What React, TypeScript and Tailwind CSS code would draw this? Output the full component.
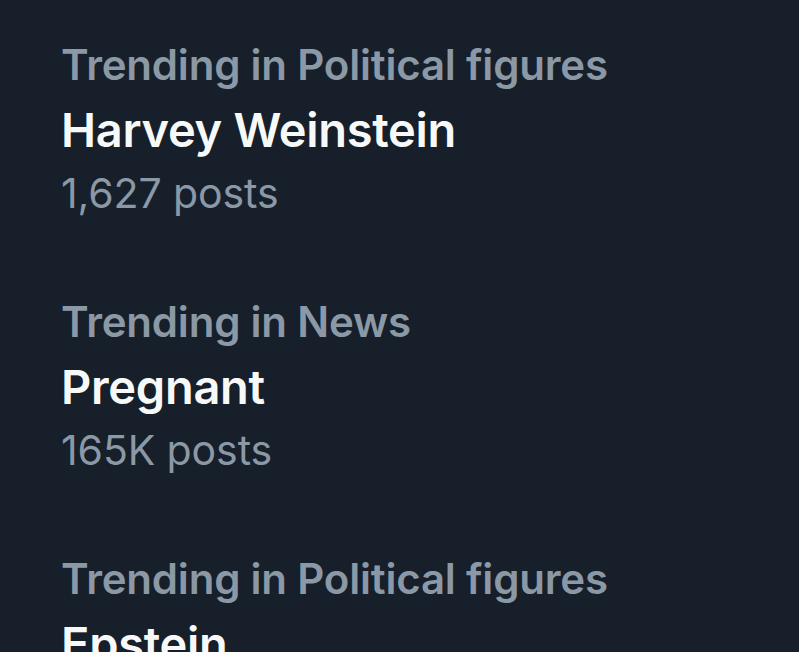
const trends = [
  { category: "Trending in Political figures", title: "Harvey Weinstein", posts: "1,627 posts" },
  { category: "Trending in News", title: "Pregnant", posts: "165K posts" },
  { category: "Trending in Political figures", title: "Epstein", posts: "" },
];

export default function App() {
  return (
    <div className="h-[652px] w-[799px] overflow-hidden bg-[#161f2a] font-['Inter',sans-serif]">
      <div className="flex flex-col pt-[35px] pl-[61px]">
        {trends.map((t, i) => (
          <div key={i} className="flex flex-col pb-[71px]">
            <div className="text-[42px] leading-[60px] font-semibold tracking-[-0.2px] text-[#8b98a5]">{t.category}</div>
            <div className="text-[47px] leading-[70px] font-semibold tracking-[-0.3px] text-[#f7f9f9]">{t.title}</div>
            {t.posts && (
              <div className="text-[41px] leading-[56px] font-normal tracking-[-0.1px] text-[#8b98a5]">{t.posts}</div>
            )}
          </div>
        ))}
      </div>
    </div>
  );
}
